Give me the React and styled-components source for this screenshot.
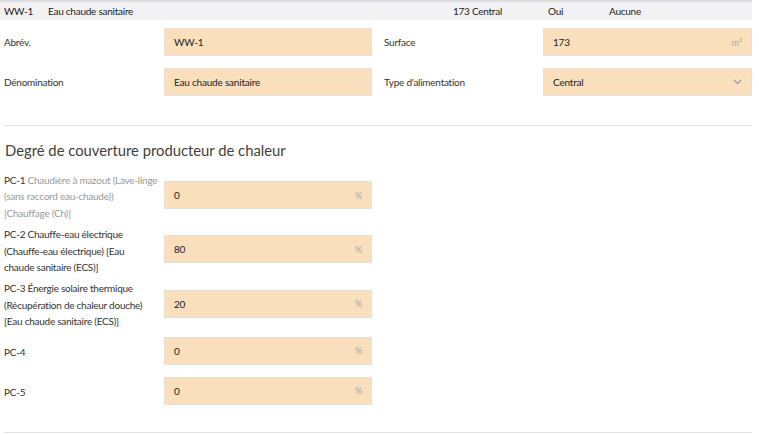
import React from "react";
import styled, { createGlobalStyle } from "styled-components";

const Global = createGlobalStyle`
  html, body { margin: 0; padding: 0; background: #fff; }
  body { font-family: Lato, "Liberation Sans", sans-serif; color: #333; }
`;

const Page = styled.div`
  width: 752px;
  padding-bottom: 2px;
`;

const SummaryBar = styled.div`
  display: flex;
  align-items: center;
  height: 18px;
  background: #f2f2f4;
  border-top: 2px solid #dcdcde;
  font-size: 10px;
  letter-spacing: -0.25px;
  color: #222;
`;

const Cell = styled.span`
  box-sizing: border-box;
  width: ${(p) => (p.$w ? `${p.$w}px` : "auto")};
  padding-left: ${(p) => p.$pl || 0}px;
  text-align: ${(p) => p.$align || "left"};
  flex-shrink: 0;
  white-space: nowrap;
`;

const FieldGrid = styled.div`
  display: grid;
  grid-template-columns: 1fr 1fr;
  column-gap: 12px;
  padding: 2px 0 0 4px;
`;

const FieldRow = styled.div`
  display: flex;
  align-items: center;
  min-height: ${(p) => p.$h || 40}px;
`;

const Label = styled.div`
  width: ${(p) => p.$w || 160}px;
  flex-shrink: 0;
  font-size: 10px;
  letter-spacing: -0.25px;
  line-height: 16.4px;
  color: #333;
  padding-top: ${(p) => p.$pt || 0}px;
  box-sizing: border-box;
`;

const Line = styled.span`
  display: block;
  white-space: nowrap;
`;

const Muted = styled.span`
  color: #9a9a9a;
`;

const InputBox = styled.div`
  flex: 1;
  height: 28px;
  box-sizing: border-box;
  background: #f9dfbc;
  border: 1px solid #e6e0d8;
  display: flex;
  align-items: center;
  padding: 0 9px 0 9px;
  font-size: 10px;
  letter-spacing: -0.2px;
  color: #222;
`;

const Value = styled.span`
  flex: 1;
`;

const Unit = styled.span`
  color: #a8a8a8;
  font-size: 9px;
  sup { font-size: 6px; vertical-align: 4px; }
`;

const Divider = styled.hr`
  border: 0;
  border-top: 1px solid #e2e2e2;
  margin: ${(p) => p.$m || "0"};
  margin-left: 4px;
`;

const Heading = styled.h2`
  margin: 14px 0 9px 5px;
  font-size: 14.8px;
  font-weight: 400;
  color: #3f3f3f;
  line-height: 20px;
`;

const Coverage = styled.div`
  display: flex;
  flex-direction: column;
  gap: 2px;
  padding-left: 4px;
  width: 368px;
`;

const Chevron = () => (
  <svg width="9" height="6" viewBox="0 0 9 6" fill="none">
    <path d="M1 1l3.5 3.5L8 1" stroke="#999" strokeWidth="1.2" />
  </svg>
);

const rows = [
  {
    code: "PC-1",
    lines: ["Chaudière à mazout (Lave-linge", "(sans raccord eau-chaude))", "[Chauffage (Ch)]"],
    muted: true,
    value: "0",
  },
  {
    code: "PC-2",
    lines: ["Chauffe-eau électrique", "(Chauffe-eau électrique) [Eau", "chaude sanitaire (ECS)]"],
    value: "80",
  },
  {
    code: "PC-3",
    lines: ["Énergie solaire thermique", "(Récupération de chaleur douche)", "[Eau chaude sanitaire (ECS)]"],
    value: "20",
  },
  { code: "PC-4", lines: [], value: "0" },
  { code: "PC-5", lines: [], value: "0" },
];

const LabelText = ({ row }) => {
  const Wrap = row.muted ? Muted : React.Fragment;
  if (!row.lines.length) return <Line>{row.code}</Line>;
  return row.lines.map((l, i) => (
    <Line key={i}>
      {i === 0 && <>{row.code} </>}
      <Wrap>{l}</Wrap>
    </Line>
  ));
};

export default function App() {
  return (
    <>
      <Global />
      <Page>
        <SummaryBar>
          <Cell $w={48} $pl={4}>WW-1</Cell>
          <Cell $w={300}>Eau chaude sanitaire</Cell>
          <Cell $w={154} $align="right">173 Central</Cell>
          <Cell $w={107} $pl={46}>Oui</Cell>
          <Cell>Aucune</Cell>
        </SummaryBar>
        <FieldGrid>
          <FieldRow>
            <Label>Abrév.</Label>
            <InputBox><Value>WW-1</Value></InputBox>
          </FieldRow>
          <FieldRow>
            <Label $w={159}>Surface</Label>
            <InputBox>
              <Value>173</Value>
              <Unit>m<sup>2</sup></Unit>
            </InputBox>
          </FieldRow>
          <FieldRow>
            <Label>Dénomination</Label>
            <InputBox><Value>Eau chaude sanitaire</Value></InputBox>
          </FieldRow>
          <FieldRow>
            <Label $w={159}>Type d'alimentation</Label>
            <InputBox>
              <Value>Central</Value>
              <Chevron />
            </InputBox>
          </FieldRow>
        </FieldGrid>
        <Divider $m="23px 0 0 4px" />
        <Heading>Degré de couverture producteur de chaleur</Heading>
        <Coverage>
          {rows.map((r) => (
            <FieldRow key={r.code} $h={38}>
              <Label $pt={3}>
                <LabelText row={r} />
              </Label>
              <InputBox>
                <Value>{r.value}</Value>
                <Unit>%</Unit>
              </InputBox>
            </FieldRow>
          ))}
        </Coverage>
        <Divider $m="22px 0 0 4px" />
      </Page>
    </>
  );
}
